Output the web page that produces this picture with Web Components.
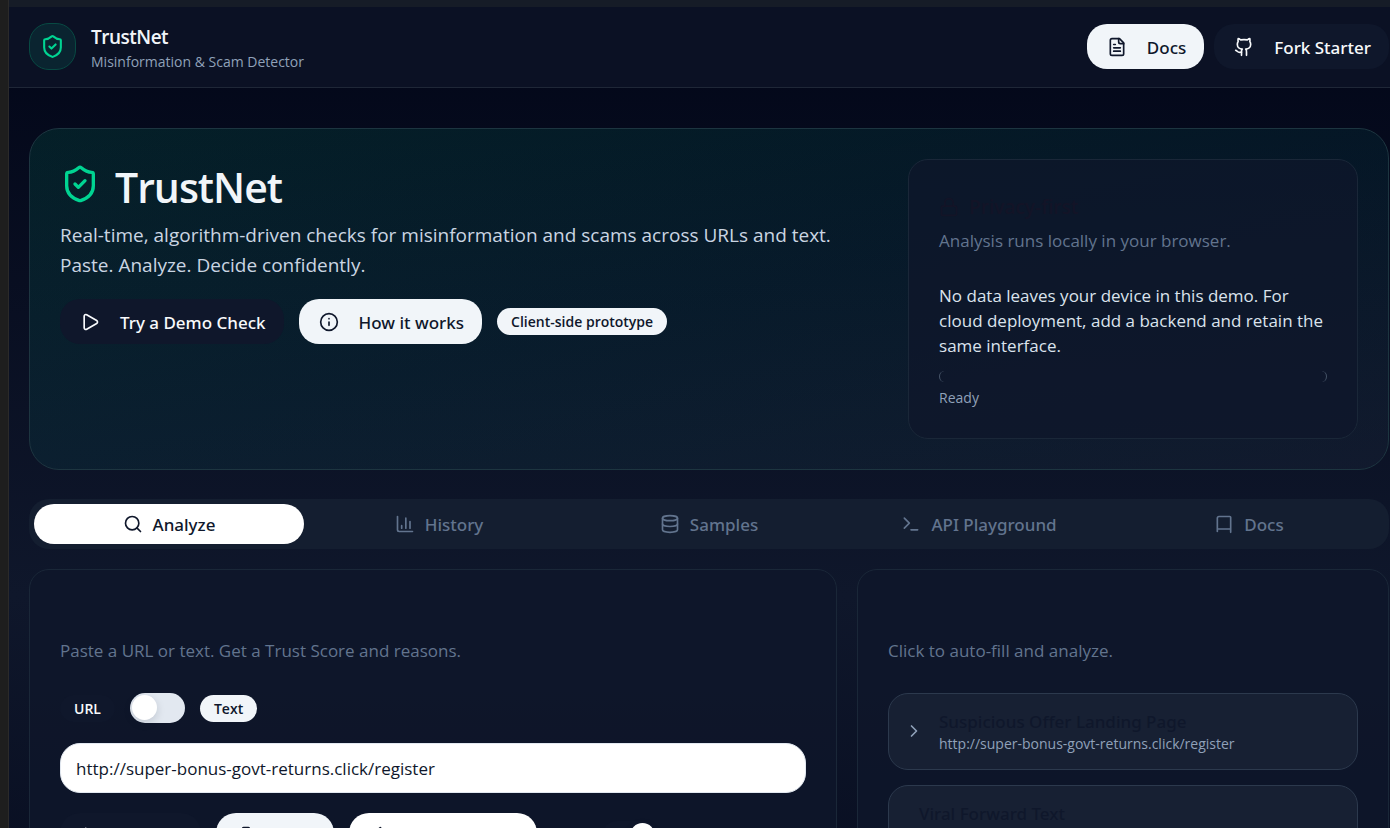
<!DOCTYPE html>
<html lang="en">
<head>
<meta charset="utf-8">
<title>TrustNet</title>
<meta name="viewport" content="width=device-width, initial-scale=1">
<style>
html { background: #1e1e1e; scrollbar-width: none; }
body { margin: 0; font-family: "Open Sans", "Noto Sans", sans-serif; color: #e2e8f0; overflow-x: hidden; }
</style>
</head>
<body>
<tn-app></tn-app>
<script>
const define = (name, html, setup) => {
  const template = document.createElement('template');
  template.innerHTML = html;
  customElements.define(name, class extends HTMLElement {
    constructor() {
      super();
      this.attachShadow({ mode: 'open' }).append(template.content.cloneNode(true));
    }
    connectedCallback() { if (setup) setup(this, this.shadowRoot); }
  });
};

const ICONS = {
  shield: '<path d="M20 13c0 5-3.5 7.500-7.660 8.950a1 1 0 0 1-.67-.01C7.500 20.500 4 18 4 13V6a1 1 0 0 1 1-1c2 0 4.500-1.200 6.240-2.720a1.170 1.170 0 0 1 1.520 0C14.510 3.810 17 5 19 5a1 1 0 0 1 1 1z"/><path d="m9 12 2 2 4-4"/>',
  file: '<path d="M15 2H6a2 2 0 0 0-2 2v16a2 2 0 0 0 2 2h12a2 2 0 0 0 2-2V7Z"/><path d="M14 2v4a2 2 0 0 0 2 2h4M10 9H8M16 13H8M16 17H8"/>',
  github: '<path d="M15 22v-4a4.800 4.800 0 0 0-1-3.500c3 0 6-2 6-5.500.08-1.250-.27-2.480-1-3.500.28-1.150.28-2.350 0-3.500 0 0-1 0-3 1.500-2.640-.5-5.360-.5-8 0C6 2 5 2 5 2c-.3 1.150-.3 2.350 0 3.500A5.403 5.403 0 0 0 4 9c0 3.500 3 5.500 6 5.500-.39.490-.68 1.050-.85 1.650-.17.6-.22 1.230-.15 1.850v4"/><path d="M9 18c-4.510 2-5-2-7-2"/>',
  play: '<path d="M5 5a2 2 0 0 1 3.008-1.728l11.997 6.998a2 2 0 0 1 .003 3.458l-12 7A2 2 0 0 1 5 19z"/>',
  info: '<circle cx="12" cy="12" r="10"/><path d="M12 16v-4M12 8h.01"/>',
  lock: '<rect x="3" y="11" width="18" height="11" rx="2"/><path d="M7 11V7a5 5 0 0 1 10 0v4"/>',
  search: '<circle cx="11" cy="11" r="8"/><path d="m21 21-4.340-4.340"/>',
  chart: '<path d="M3 3v16a2 2 0 0 0 2 2h16M18 17V9M13 17V5M8 17v-3"/>',
  database: '<ellipse cx="12" cy="5" rx="9" ry="3"/><path d="M3 5v14a9 3 0 0 0 18 0V5"/><path d="M3 12a9 3 0 0 0 18 0"/>',
  terminal: '<path d="m4 17 6-6-6-6M12 19h8"/>',
  book: '<path d="M4 19V5a2 2 0 0 1 2-2h13a1 1 0 0 1 1 1v18M4 21v-3h16"/>',
  chevron: '<path d="m9 18 6-6-6-6"/>',
  sparkles: '<path d="M7 2.800 9 8a2 2 0 0 0 1.500 1.500l8 1.500a1 1 0 0 1 0 1.900l-8 1.500A2 2 0 0 0 9 15.900L7 21.500 5 15.900"/>',
  clipboard: '<rect x="8" y="2" width="8" height="4" rx="1"/><path d="M16 4h2a2 2 0 0 1 2 2v14a2 2 0 0 1-2 2H6a2 2 0 0 1-2-2V6a2 2 0 0 1 2-2h2"/>',
  bolt: '<path d="M4 14a1 1 0 0 1-.78-1.630l9.900-10.200a.5.5 0 0 1 .86.460l-1.920 6.020A1 1 0 0 0 13 10h7a1 1 0 0 1 .78 1.630l-9.900 10.200a.5.5 0 0 1-.86-.46l1.920-6.020A1 1 0 0 0 11 14z"/>'
};

define('tn-icon', `
<style>
:host { display: inline-block; width: 20px; height: 20px; flex: none; }
svg { display: block; width: 100%; height: 100%; fill: none; stroke: currentColor; stroke-width: 2; stroke-linecap: round; stroke-linejoin: round; }
</style>
<svg viewBox="0 0 24 24" aria-hidden="true"></svg>`,
(host, root) => { root.querySelector('svg').innerHTML = ICONS[host.getAttribute('name')]; });

define('tn-button', `
<style>
:host { display: inline-block; flex: none; }
button { display: flex; align-items: center; gap: 20px; box-sizing: border-box; height: 45px; padding: 0 18px 0 20px; border: 0; border-radius: 20px; background: #0f172b; color: #f8fafc; font: 500 17px/16px "Noto Sans", sans-serif; white-space: nowrap; }
.label { padding-top: 2px; }
:host([variant=light]) button { background: #f1f5f9; color: #0f172b; }
:host([variant=white]) button { background: #fff; color: #0f172b; }
</style>
<button type="button"><tn-icon></tn-icon><span class="label"><slot></slot></span></button>`,
(host, root) => root.querySelector('tn-icon').replaceWith(Object.assign(document.createElement('span'), { style: 'display:contents', innerHTML: `<tn-icon name="${host.getAttribute('icon')}"></tn-icon>` })));

define('tn-badge', `
<style>
:host { display: inline-block; box-sizing: border-box; flex: none; padding: 4px 14px 3px; border-radius: 15px; background: #0f172b; color: #f8fafc; font: 600 14px/20px "Open Sans", sans-serif; }
:host([variant=light]) { background: #f1f5f9; color: #0f172b; }
</style>
<slot></slot>`);

define('tn-switch', `
<style>
:host { display: inline-block; flex: none; line-height: 0; }
input { appearance: none; margin: 0; box-sizing: border-box; width: 55px; height: 30px; padding: 2px; border-radius: 15px; background: #e2e8f0; display: flex; }
input::before { content: ""; width: 25px; height: 25px; border-radius: 50%; background: #fff; box-shadow: 0 3px 8px rgb(15 23 43 / .15); }
input:checked { background: #0f172b; justify-content: flex-end; }
</style>
<input type="checkbox" role="switch">`,
(host, root) => {
  const input = root.querySelector('input');
  input.checked = host.hasAttribute('checked');
  input.setAttribute('aria-label', host.getAttribute('label'));
});

define('tn-header', `
<style>
:host { display: block; background: #0b1124; border-bottom: 1px solid #1f2737; }
header { display: flex; justify-content: space-between; align-items: center; box-sizing: border-box; height: 80px; padding: 0 1px 1px 20px; }
.brand { display: flex; align-items: center; gap: 15px; }
.logo { display: grid; place-items: center; box-sizing: border-box; width: 47px; height: 47px; border: 1px solid #084a43; border-radius: 20px; background: #0a2430; color: #00d492; }
.logo tn-icon { width: 25px; height: 25px; }
.name { padding-top: 5px; }
h2 { margin: 0; font-size: 19px; line-height: 25px; font-weight: 600; letter-spacing: -.5px; color: #f1f5f9; }
p { margin: 0; font-size: 14px; line-height: 24px; color: #90a1b9; }
nav { display: flex; gap: 10px; }
</style>
<header>
  <div class="brand">
    <div class="logo"><tn-icon name="shield"></tn-icon></div>
    <div class="name"><h2>TrustNet</h2><p>Misinformation &amp; Scam Detector</p></div>
  </div>
  <nav><tn-button variant="light" icon="file">Docs</tn-button><tn-button icon="github">Fork Starter</tn-button></nav>
</header>`);

define('tn-card', `
<style>
:host { display: block; box-sizing: border-box; min-width: 0; padding: 30px; border: 1px solid #1a2738; border-radius: 20px; background: rgb(15 23 43 / .75); }
h3 { margin: 0; min-height: 38px; }
.desc { margin: 0; font-size: 17px; line-height: 25px; color: #62748e; }
.body { margin-top: 30px; }
h3 ::slotted(*) { display: flex; align-items: center; gap: 10px; }
</style>
<h3><slot name="title"></slot></h3>
<p class="desc"><slot name="desc"></slot></p>
<div class="body"><slot></slot></div>`);

define('tn-hero', `
<style>
:host { display: grid; grid-template-columns: 20fr 11fr; gap: 30px; box-sizing: border-box; padding: 30px; border: 1px solid #1d3540; border-radius: 30px; background: linear-gradient(to bottom right, rgb(0 188 125 / .12), rgb(0 150 137 / .09) 50%, rgb(29 41 61 / .3)); }
h1 { display: flex; align-items: center; gap: 15px; margin: 0; height: 56px; font-size: 41px; line-height: 56px; font-weight: 600; letter-spacing: -1px; color: #f1f5f9; }
h1 tn-icon { width: 40px; height: 40px; color: #00d492; margin-bottom: 6px; }
.lead { margin: 5px 0 19px; font-size: 19px; line-height: 30px; color: #cad5e2; }
.actions { display: flex; flex-wrap: wrap; align-items: center; gap: 15px; }
.title { font-size: 19px; line-height: 34px; font-weight: 600; color: #131427; }
.note { margin: 0; font-size: 17px; line-height: 25px; color: #dbe3ed; }
.bar { box-sizing: border-box; height: 11px; margin: 13px 0 6px; border: 1px solid #475569; border-width: 0 1px; border-radius: 6px; }
.state { margin: 0; font-size: 14px; line-height: 20px; color: #90a1b9; }
</style>
<div>
  <h1><tn-icon name="shield"></tn-icon>TrustNet</h1>
  <p class="lead">Real-time, algorithm-driven checks for misinformation and scams across URLs and text. Paste. Analyze. Decide confidently.</p>
  <div class="actions">
    <tn-button icon="play">Try a Demo Check</tn-button>
    <tn-button variant="light" icon="info">How it works</tn-button>
    <tn-badge variant="light">Client-side prototype</tn-badge>
  </div>
</div>
<tn-card>
  <span slot="title" class="title"><tn-icon name="lock"></tn-icon>Privacy-first</span>
  <span slot="desc">Analysis runs locally in your browser.</span>
  <p class="note">No data leaves your device in this demo. For cloud deployment, add a backend and retain the same interface.</p>
  <div class="bar" role="progressbar" aria-label="Analysis progress" aria-valuenow="0"></div>
  <p class="state">Ready</p>
</tn-card>`);

define('tn-tabs', `
<style>
:host { display: block; margin: 29px 0 20px; }
div { display: grid; grid-template-columns: repeat(5, 1fr); padding: 5px; border-radius: 20px; background: #141e30; }
button { display: flex; align-items: center; justify-content: center; gap: 10px; height: 40px; padding: 0; border: 0; border-radius: 20px; background: none; color: #62748e; font: 500 17px/16px "Noto Sans", sans-serif; }
button span { padding-top: 2px; }
button[aria-selected=true] { background: #fff; color: #0f172b; }
</style>
<div role="tablist">
  <button type="button" role="tab" aria-selected="true"><tn-icon name="search"></tn-icon><span>Analyze</span></button>
  <button type="button" role="tab"><tn-icon name="chart"></tn-icon><span>History</span></button>
  <button type="button" role="tab"><tn-icon name="database"></tn-icon><span>Samples</span></button>
  <button type="button" role="tab"><tn-icon name="terminal"></tn-icon><span>API Playground</span></button>
  <button type="button" role="tab"><tn-icon name="book"></tn-icon><span>Docs</span></button>
</div>`);

define('tn-analyzer', `
<style>
:host { display: block; grid-column: span 3; min-width: 0; }
tn-card { height: 100%; }
.mode, .actions { display: flex; align-items: center; gap: 15px; }
.url { box-sizing: border-box; display: block; width: 100%; height: 50px; margin: 20px 0; padding: 0 15px; border: 1px solid #e2e8f0; border-radius: 20px; background: #fff; color: #0f172b; font: 400 17px/26px "Open Sans", sans-serif; }
.actions tn-switch { margin-left: 50px; }
</style>
<tn-card>
  <span slot="desc">Paste a URL or text. Get a Trust Score and reasons.</span>
  <div class="mode">
    <tn-badge>URL</tn-badge><tn-switch label="Analyze text instead of a URL"></tn-switch><tn-badge variant="light">Text</tn-badge>
  </div>
  <input class="url" type="text" aria-label="URL" value="http://super-bonus-govt-returns.click/register">
  <div class="actions">
    <tn-button icon="sparkles">Analyze</tn-button>
    <tn-button variant="light" icon="clipboard">Copy</tn-button>
    <tn-button variant="white" icon="bolt">Quick sample</tn-button>
    <tn-switch checked label="Save to history"></tn-switch>
  </div>
</tn-card>`);

define('tn-sample', `
<style>
:host { display: block; }
button { display: flex; align-items: center; gap: 15px; box-sizing: border-box; width: 100%; min-height: 77px; padding: 0 15px 2px; border: 1px solid #2c394d; border-radius: 20px; background: #172033; text-align: left; font-family: inherit; color: #90a1b9; }
:host([plain]) button { padding-left: 30px; }
:host([plain]) tn-icon { display: none; }
.text { padding-top: 5px; }
b { display: block; font: 500 17px/22px "Noto Sans", sans-serif; color: #0f172b; }
.value { display: block; font-size: 14px; line-height: 22px; }
</style>
<button type="button"><tn-icon name="chevron"></tn-icon><div class="text"><b><slot name="name"></slot></b><span class="value"><slot></slot></span></div></button>`);

define('tn-samples', `
<style>
:host { display: block; grid-column: span 2; min-width: 0; }
tn-card { height: 100%; }
.list { display: grid; gap: 15px; }
</style>
<tn-card>
  <span slot="desc">Click to auto-fill and analyze.</span>
  <div class="list">
    <tn-sample><span slot="name">Suspicious Offer Landing Page</span>http://super-bonus-govt-returns.click/register</tn-sample>
    <tn-sample plain><span slot="name">Viral Forward Text</span>Forward this message to ten people today</tn-sample>
  </div>
</tn-card>`);

define('tn-app', `
<style>
:host { display: block; padding-left: 8px; }
.page { border-left: 1px solid #2b2a2a; background: linear-gradient(#020618, #0f172b 50%, #020618); min-height: 1190px; }
.strip { height: 7px; background: #161c27; }
main { padding: 40px 1px 40px 20px; }
.columns { display: grid; grid-template-columns: repeat(5, 1fr); gap: 20px; }
</style>
<div class="page">
  <div class="strip"></div>
  <tn-header></tn-header>
  <main>
    <tn-hero></tn-hero>
    <tn-tabs></tn-tabs>
    <div class="columns"><tn-analyzer></tn-analyzer><tn-samples></tn-samples></div>
  </main>
</div>`);
</script>
</body>
</html>
